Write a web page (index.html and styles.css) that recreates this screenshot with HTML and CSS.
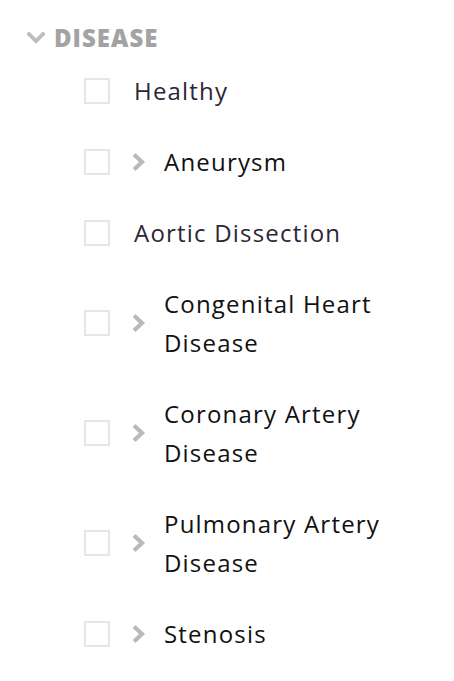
FILE: index.html
```html
<!DOCTYPE html>
<html>
<head>
<meta charset="utf-8">
<link rel="stylesheet" href="styles.css">
</head>
<body>
<div class="filter">
  <div class="group-head">
    <svg class="caret-down" width="18" height="12" viewBox="0 0 18 12"><polyline points="2,2 9,9 16,2" fill="none" stroke="#bdbdbd" stroke-width="3.8" stroke-linecap="square"/></svg>
    <span class="group-title">DISEASE</span>
  </div>
  <ul class="items">
    <li class="item"><span class="box"></span><span class="label muted">Healthy</span></li>
    <li class="item"><span class="box"></span><span class="chev"><svg width="15" height="20" viewBox="0 0 15 20"><polyline points="3,2.5 11,10 3,17.5" fill="none" stroke="#bababa" stroke-width="4.2"/></svg></span><span class="label">Aneurysm</span></li>
    <li class="item"><span class="box"></span><span class="label muted">Aortic Dissection</span></li>
    <li class="item"><span class="box"></span><span class="chev"><svg width="15" height="20" viewBox="0 0 15 20"><polyline points="3,2.5 11,10 3,17.5" fill="none" stroke="#bababa" stroke-width="4.2"/></svg></span><span class="label">Congenital Heart Disease</span></li>
    <li class="item"><span class="box"></span><span class="chev"><svg width="15" height="20" viewBox="0 0 15 20"><polyline points="3,2.5 11,10 3,17.5" fill="none" stroke="#bababa" stroke-width="4.2"/></svg></span><span class="label">Coronary Artery Disease</span></li>
    <li class="item"><span class="box"></span><span class="chev"><svg width="15" height="20" viewBox="0 0 15 20"><polyline points="3,2.5 11,10 3,17.5" fill="none" stroke="#bababa" stroke-width="4.2"/></svg></span><span class="label">Pulmonary Artery Disease</span></li>
    <li class="item"><span class="box"></span><span class="chev"><svg width="15" height="20" viewBox="0 0 15 20"><polyline points="3,2.5 11,10 3,17.5" fill="none" stroke="#bababa" stroke-width="4.2"/></svg></span><span class="label">Stenosis</span></li>
  </ul>
</div>
</body>
</html>
```
FILE: styles.css
```css
html, body {
  margin: 0;
  padding: 0;
  background: #ffffff;
}
body {
  font-family: "Open Sans", "Liberation Sans", sans-serif;
}
.filter {
  width: 454px;
}
.group-head {
  display: flex;
  align-items: center;
  padding: 23px 0 2px 27px;
  height: 30px;
}
.caret-down {
  display: block;
  margin-right: 9px;
}
.group-title {
  font-weight: 800;
  font-size: 24px;
  line-height: 30px;
  color: #a3a3a3;
  letter-spacing: 1px;
}
.items {
  list-style: none;
  margin: 0;
  padding: 0 0 0 84px;
}
.item {
  display: flex;
  align-items: center;
  padding: 16px 0;
}
.box {
  flex: 0 0 auto;
  width: 22px;
  height: 22px;
  border: 2px solid #e6e6e6;
  margin-right: 24px;
}
.chev {
  flex: 0 0 auto;
  width: 33px;
  margin-left: -3px;
  display: flex;
  align-items: center;
}
.chev svg {
  display: block;
}
.label {
  font-size: 24px;
  line-height: 39px;
  letter-spacing: 1.2px;
  color: #111111;
  max-width: 236px;
}
.label.muted {
  color: #2e2538;
}
```
